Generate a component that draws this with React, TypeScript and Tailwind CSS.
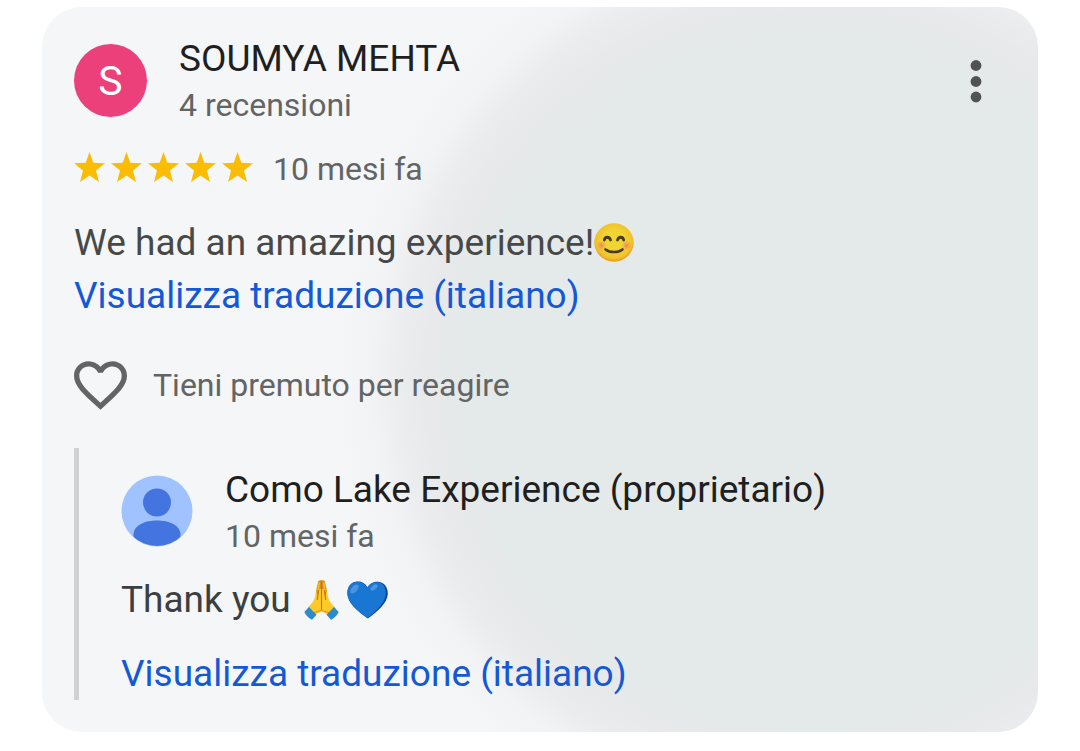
import type { ReactNode } from 'react';

const STAR_COUNT = 5;

function Star() {
  return (
    <svg viewBox="0 0 31 30" className="h-[30px] w-[31px]" fill="#fbbc04" aria-hidden="true">
      <path d="M15.5 0 L19.3 10.7 L31 11.3 L22 18.4 L25 30 L15.5 23.6 L6 30 L9 18.4 L0 11.3 L11.7 10.7 Z" />
    </svg>
  );
}

function HeartOutline() {
  return (
    <svg viewBox="2 3 20 18.35" className="h-[49px] w-[53px] shrink-0" fill="#636464" aria-hidden="true">
      <path d="M16.5 3c-1.74 0-3.41.81-4.5 2.09C10.91 3.81 9.24 3 7.5 3 4.42 3 2 5.42 2 8.5c0 3.78 3.4 6.86 8.55 11.54L12 21.35l1.45-1.32C18.6 15.36 22 12.28 22 8.5 22 5.42 19.58 3 16.5 3zm-4.4 15.55l-.1.1-.1-.1C7.14 14.24 4 11.39 4 8.5 4 6.5 5.5 5 7.5 5c1.54 0 3.04.99 3.57 2.36h1.87C13.46 5.99 14.96 5 16.5 5c2 0 3.5 1.5 3.5 3.5 0 2.89-3.14 5.74-7.9 10.05z" />
    </svg>
  );
}

function OwnerAvatar() {
  return (
    <svg viewBox="0 0 72 72" className="mt-[9px] h-[72px] w-[72px] shrink-0" aria-hidden="true">
      <defs>
        <clipPath id="owner-clip">
          <circle cx="36" cy="36" r="35" />
        </clipPath>
      </defs>
      <circle cx="36" cy="36" r="35.5" fill="#a0c3ff" />
      <g fill="#4374e0" clipPath="url(#owner-clip)">
        <circle cx="36" cy="27.5" r="14" />
        <path d="M12.5 60 C12.5 50 24 45.5 36 45.5 S59.5 50 59.5 60 C59.5 68 48 74 36 74 S12.5 68 12.5 60 Z" />
      </g>
    </svg>
  );
}

function SmileEmoji() {
  return (
    <svg viewBox="0 0 40 39" className="inline-block h-[39px] w-[40px] align-[-7px]" role="img" aria-label="😊">
      <defs>
        <radialGradient id="smile-face" cx="0.5" cy="0.45" r="0.55">
          <stop offset="0.5" stopColor="#efd532" />
          <stop offset="0.85" stopColor="#f1c02c" />
          <stop offset="1" stopColor="#e8951c" />
        </radialGradient>
        <radialGradient id="smile-cheek">
          <stop offset="0" stopColor="#ee7f68" stopOpacity="0.85" />
          <stop offset="1" stopColor="#ee7f68" stopOpacity="0" />
        </radialGradient>
      </defs>
      <ellipse cx="20" cy="19.5" rx="19.7" ry="19.2" fill="url(#smile-face)" />
      <circle cx="7.5" cy="22.5" r="5" fill="url(#smile-cheek)" />
      <circle cx="32.5" cy="22.5" r="5" fill="url(#smile-cheek)" />
      <g fill="none" stroke="#4b3820" strokeLinecap="round">
        <path d="M10.3 17 C11 13.3 15.5 13.3 16.5 17" strokeWidth="2.8" />
        <path d="M23.5 17 C24.5 13.3 29 13.3 29.7 17" strokeWidth="2.8" />
        <path d="M11.5 26.4 C16 30 24 30 28.5 26.4" strokeWidth="2.5" />
      </g>
    </svg>
  );
}

function PrayEmoji() {
  return (
    <svg viewBox="0 0 35 40" className="ml-1 inline-block h-[40px] w-[35px] align-[-8px]" role="img" aria-label="🙏">
      <path d="M17.5 .5 L14 1 L12 11 C11.4 16 10.5 20 8 23 C6 25.5 3.5 27 3.5 29 L10 36 C13 33 16 32.5 17.5 31.5 C19 32.5 22 33 25 36 L31.5 29 C31.5 27 29 25.5 27 23 C24.5 20 23.6 16 23 11 L21 1 Z" fill="#ffca28" />
      <path d="M14.4 1 C15.5 0 19.5 0 20.6 1 L22.8 11 L21.3 17 L19.5 9 H15.5 L13.7 17 L12.2 11 Z" fill="#d99025" />
      <path d="M15.2 2.5 L14 12 M19.8 2.5 L21 12" fill="none" stroke="#ffc62a" strokeWidth="1.3" />
      <path d="M17.5 1 V31 M14.5 10 L13.3 20 M20.5 10 L21.7 20" fill="none" stroke="#bd7518" strokeWidth="1.1" />
      <path d="M10 33 C13 30.5 16 32 17.5 30 C19 32 22 30.5 25 33" fill="none" stroke="#e59a20" strokeWidth="1.2" />
      <path d="M5 27 L12.5 34.8 L8 39.8 Q2.5 37 .3 32 Z" fill="#2d8bc9" />
      <path d="M30 27 L22.5 34.8 L27 39.8 Q32.5 37 34.7 32 Z" fill="#2d8bc9" />
    </svg>
  );
}

function BlueHeartEmoji() {
  return (
    <svg viewBox="0 0 41 38" className="ml-2 inline-block h-[38px] w-[41px] align-[-7px]" role="img" aria-label="💙">
      <path d="M20.5 6.5 C23.5 1.5 28 .3 31.5 .8 C37 1.5 41 6 40.8 13 C40.5 22 30 31 20.8 37.5 C11 30.5 .5 22 .3 12.5 C.2 5 5 .6 10.5 .6 C15 .6 18.5 2.5 20.5 6.5 Z" fill="#0d47a1" />
      <path d="M20 7 C22.5 2.2 27 1 30.5 1.3 C36 1.8 38.8 6 38.7 12.5 C38.5 21 30 29.5 20.3 37 C10.5 29.8 .7 22 .5 12.5 C.4 5 5 .8 10.5 .8 C15 .8 18 3 20 7 Z" fill="#1976d2" />
      <ellipse cx="7.5" cy="8" rx="5.4" ry="2.9" transform="rotate(-48 7.5 8)" fill="#4b95e0" />
      <ellipse cx="27" cy="6.5" rx="4" ry="2.2" transform="rotate(-38 27 6.5)" fill="#4b95e0" />
    </svg>
  );
}

function TranslateLink({ children }: { children: ReactNode }) {
  return (
    <a href="#translate" className="block text-[37px] leading-[53px] text-[#1558d6]">
      {children}
    </a>
  );
}

export default function App() {
  return (
    <main className="bg-white px-[42px] pt-[7px] pb-5 font-['Roboto','Liberation_Sans',sans-serif]">
      <article className="rounded-[40px] bg-[#f4f6f8] bg-[radial-gradient(circle_at_770px_371px,#e4e9e9_0px,#e4e9e9_345px,#e8e9ea_385px,#ebecee_410px,#f2f3f5_440px,#f4f6f8_480px)] px-8 pt-7 pb-8">
        <header className="flex items-start">
          <div className="mt-[9px] flex h-[73px] w-[73px] shrink-0 items-center justify-center rounded-full bg-[#ec407a] pt-[2px] text-[41px] text-white">
            S
          </div>
          <div className="ml-8 grow leading-[47px]">
            <h2 className="text-[37px] text-[#1f1f1f]">SOUMYA MEHTA</h2>
            <p className="text-[32px] text-[#636464]">4 recensioni</p>
          </div>
          <button type="button" aria-label="Altre opzioni" className="mt-6 mr-6">
            <svg viewBox="0 0 12 44" className="h-11 w-3" fill="#515353">
              <circle cx="6" cy="6.5" r="5.4" />
              <circle cx="6" cy="22.5" r="5.4" />
              <circle cx="6" cy="38" r="5.4" />
            </svg>
          </button>
        </header>

        <div className="mt-[17px] flex items-center">
          <div role="img" aria-label="5 stelle" className="flex gap-[6px] pb-[6px]">
            {Array.from({ length: STAR_COUNT }, (_, i) => (
              <Star key={i} />
            ))}
          </div>
          <p className="ml-5 text-[32px] leading-[47px] text-[#636464]">10 mesi fa</p>
        </div>

        <div className="mt-[23px]">
          <p className="text-[37px] leading-[53px] text-[#474949]">
            We had an amazing experience!
            <SmileEmoji />
          </p>
          <TranslateLink>Visualizza traduzione (italiano)</TranslateLink>
        </div>

        <button type="button" className="mt-[39px] flex items-center text-[32px] leading-[47px] text-[#636464]">
          <HeartOutline />
          <span className="ml-[26px]">Tieni premuto per reagire</span>
        </button>

        <section className="mt-[38px] border-l-[5px] border-[#d0d1d2] pt-[18px] pl-[42px]">
          <div className="flex items-start">
            <OwnerAvatar />
            <div className="ml-8 leading-[47px]">
              <h3 className="text-[37px] text-[#1f1f1f]">Como Lake Experience (proprietario)</h3>
              <p className="text-[32px] text-[#636464]">10 mesi fa</p>
            </div>
          </div>
          <p className="mt-[13px] text-[37px] leading-[53px] text-[#3c3e3f]">
            Thank you <PrayEmoji />
            <BlueHeartEmoji />
          </p>
          <div className="mt-[21px]">
            <TranslateLink>Visualizza traduzione (italiano)</TranslateLink>
          </div>
        </section>
      </article>
    </main>
  );
}
